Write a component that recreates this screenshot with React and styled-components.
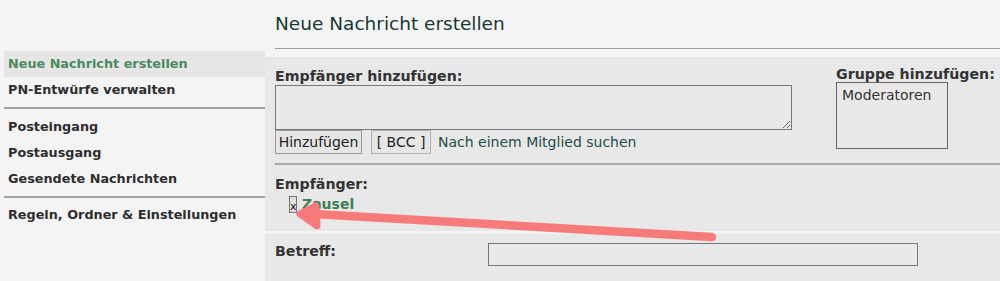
import React from "react";
import styled, { createGlobalStyle } from "styled-components";

const Global = createGlobalStyle`
  html, body { margin: 0; padding: 0; background: #f4f4f4; }
  body { font-family: "DejaVu Sans", Verdana, sans-serif; color: #333; }
`;

const Page = styled.div`
  position: relative;
  display: flex;
  width: 1000px;
  height: 281px;
  overflow: hidden;
`;

const Sidebar = styled.nav`
  margin-left: 4px;
  width: 261px;
  flex: none;
  padding-top: 51px;
`;

const NavItem = styled.div`
  height: 26px;
  line-height: 25px;
  padding-left: 4px;
  font-size: 12.8px;
  font-weight: bold;
  color: ${(p) => (p.$active ? "#4a8a5c" : "#2e2e2e")};
  background: ${(p) => (p.$active ? "#e6e6e6" : "transparent")};
  white-space: nowrap;
`;

const NavDivider = styled.div`
  height: 2px;
  background: #a0a0a0;
  margin: 4px 0 4.5px;
`;

const Main = styled.main`
  flex: 1;
  padding-top: 12px;
`;

const Title = styled.h2`
  margin: 0 0 12px 10px;
  font-size: 18.5px;
  line-height: 24px;
  font-weight: normal;
  color: #173833;
`;

const TitleRule = styled.div`
  margin-left: 10px;
  height: 1px;
  background: #9e9e9e;
  margin-bottom: 8px;
`;

const Panel = styled.section`
  background: #e8e8e8;
  padding: ${(p) => p.$pad};
`;

const TopRow = styled.div`
  display: flex;
  align-items: flex-start;
`;

const Column = styled.div`
  width: ${(p) => p.$width};
  margin-left: ${(p) => p.$left || "0"};
  margin-top: ${(p) => p.$top || "0"};
`;

const Label = styled.div`
  font-size: 14.2px;
  font-weight: bold;
  line-height: ${(p) => p.$lh || "17px"};
  color: #333;
  white-space: nowrap;
  width: ${(p) => p.$width || "auto"};
  flex: none;
`;

const TextArea = styled.textarea`
  display: block;
  box-sizing: border-box;
  width: 517px;
  height: 45px;
  margin: 0;
  border: 1px solid #777;
  background: #e9e9e9;
  font-family: "DejaVu Sans", sans-serif;
  font-size: 14px;
`;

const ButtonRow = styled.div`
  display: flex;
  align-items: center;
  height: 24px;
`;

const Button = styled.button`
  box-sizing: border-box;
  height: 24px;
  width: ${(p) => p.$width};
  margin: 0 ${(p) => p.$gap || "0"} 0 0;
  padding: 0;
  border: 1px solid ${(p) => p.$border};
  background: #e6e6e6;
  color: #222;
  font-family: "DejaVu Sans", sans-serif;
  font-size: 14px;
  line-height: 22px;
  text-align: center;
`;

const Link = styled.a`
  color: #1e4e4a;
  font-size: 14px;
  text-decoration: none;
`;

const ListBox = styled.div`
  box-sizing: border-box;
  width: 112px;
  height: 67px;
  border: 1px solid #666;
  padding: 4px 5px;
  font-size: 14px;
  line-height: 17px;
  color: #333;
`;

const Rule = styled.div`
  height: 2px;
  background: #ababab;
  margin: 9px 0 11px;
`;

const Recipient = styled.div`
  display: flex;
  align-items: center;
  gap: 5px;
  margin: 2px 0 0 14px;
  height: 18px;
`;

const RemoveButton = styled.button`
  box-sizing: border-box;
  width: 8px;
  height: 17px;
  padding: 0;
  margin: 0;
  border: 1px solid #777;
  background: #dedede;
  color: #111;
  font-family: "DejaVu Sans", sans-serif;
  font-size: 11px;
  line-height: 20px;
  overflow: hidden;
  text-align: center;
`;

const UserLink = styled.a`
  color: #3f7f52;
  font-weight: bold;
  font-size: 14px;
  text-decoration: none;
`;

const Gap = styled.div`
  height: 3px;
`;

const Row = styled.div`
  display: flex;
  align-items: flex-start;
`;

const Input = styled.input`
  box-sizing: border-box;
  width: 430px;
  height: 23px;
  margin: 0;
  border: 1px solid #777;
  background: #e9e9e9;
`;

const Overlay = styled.svg`
  position: absolute;
  left: 0;
  top: 0;
  pointer-events: none;
`;

export default function App() {
  return (
    <>
      <Global />
      <Page>
        <Sidebar>
          <NavItem $active>Neue Nachricht erstellen</NavItem>
          <NavItem>PN-Entwürfe verwalten</NavItem>
          <NavDivider />
          <NavItem>Posteingang</NavItem>
          <NavItem>Postausgang</NavItem>
          <NavItem>Gesendete Nachrichten</NavItem>
          <NavDivider />
          <NavItem>Regeln, Ordner &amp; Einstellungen</NavItem>
        </Sidebar>
        <Main>
          <Title>Neue Nachricht erstellen</Title>
          <TitleRule />
          <Panel $pad="11px 0 18px 10px">
            <TopRow>
              <Column $width="517px">
                <Label>Empfänger hinzufügen:</Label>
                <TextArea />
                <ButtonRow>
                  <Button $width="87px" $gap="9px" $border="#999">Hinzufügen</Button>
                  <Button $width="60px" $gap="7px" $border="#b0b0b0">[ BCC ]</Button>
                  <Link href="#">Nach einem Mitglied suchen</Link>
                </ButtonRow>
              </Column>
              <Column $width="160px" $left="44px" $top="-2px">
                <Label $lh="16px">Gruppe hinzufügen:</Label>
                <ListBox>Moderatoren</ListBox>
              </Column>
            </TopRow>
            <Rule />
            <Label>Empfänger:</Label>
            <Recipient>
              <RemoveButton>x</RemoveButton>
              <UserLink href="#">Zausel</UserLink>
            </Recipient>
          </Panel>
          <Gap />
          <Panel $pad="9px 0 20px 10px">
            <Row>
              <Label $width="213px">Betreff:</Label>
              <Input type="text" />
            </Row>
          </Panel>
        </Main>
        <Overlay width="1000" height="281" viewBox="0 0 1000 281">
          <g stroke="#f77b7b" strokeLinecap="round" strokeLinejoin="round" fill="#f77b7b">
            <path d="M712 237 L314 214" fill="none" strokeWidth="8.5" />
            <path d="M300 214 L316 206 L317 226 Z" strokeWidth="7" />
          </g>
        </Overlay>
      </Page>
    </>
  );
}
